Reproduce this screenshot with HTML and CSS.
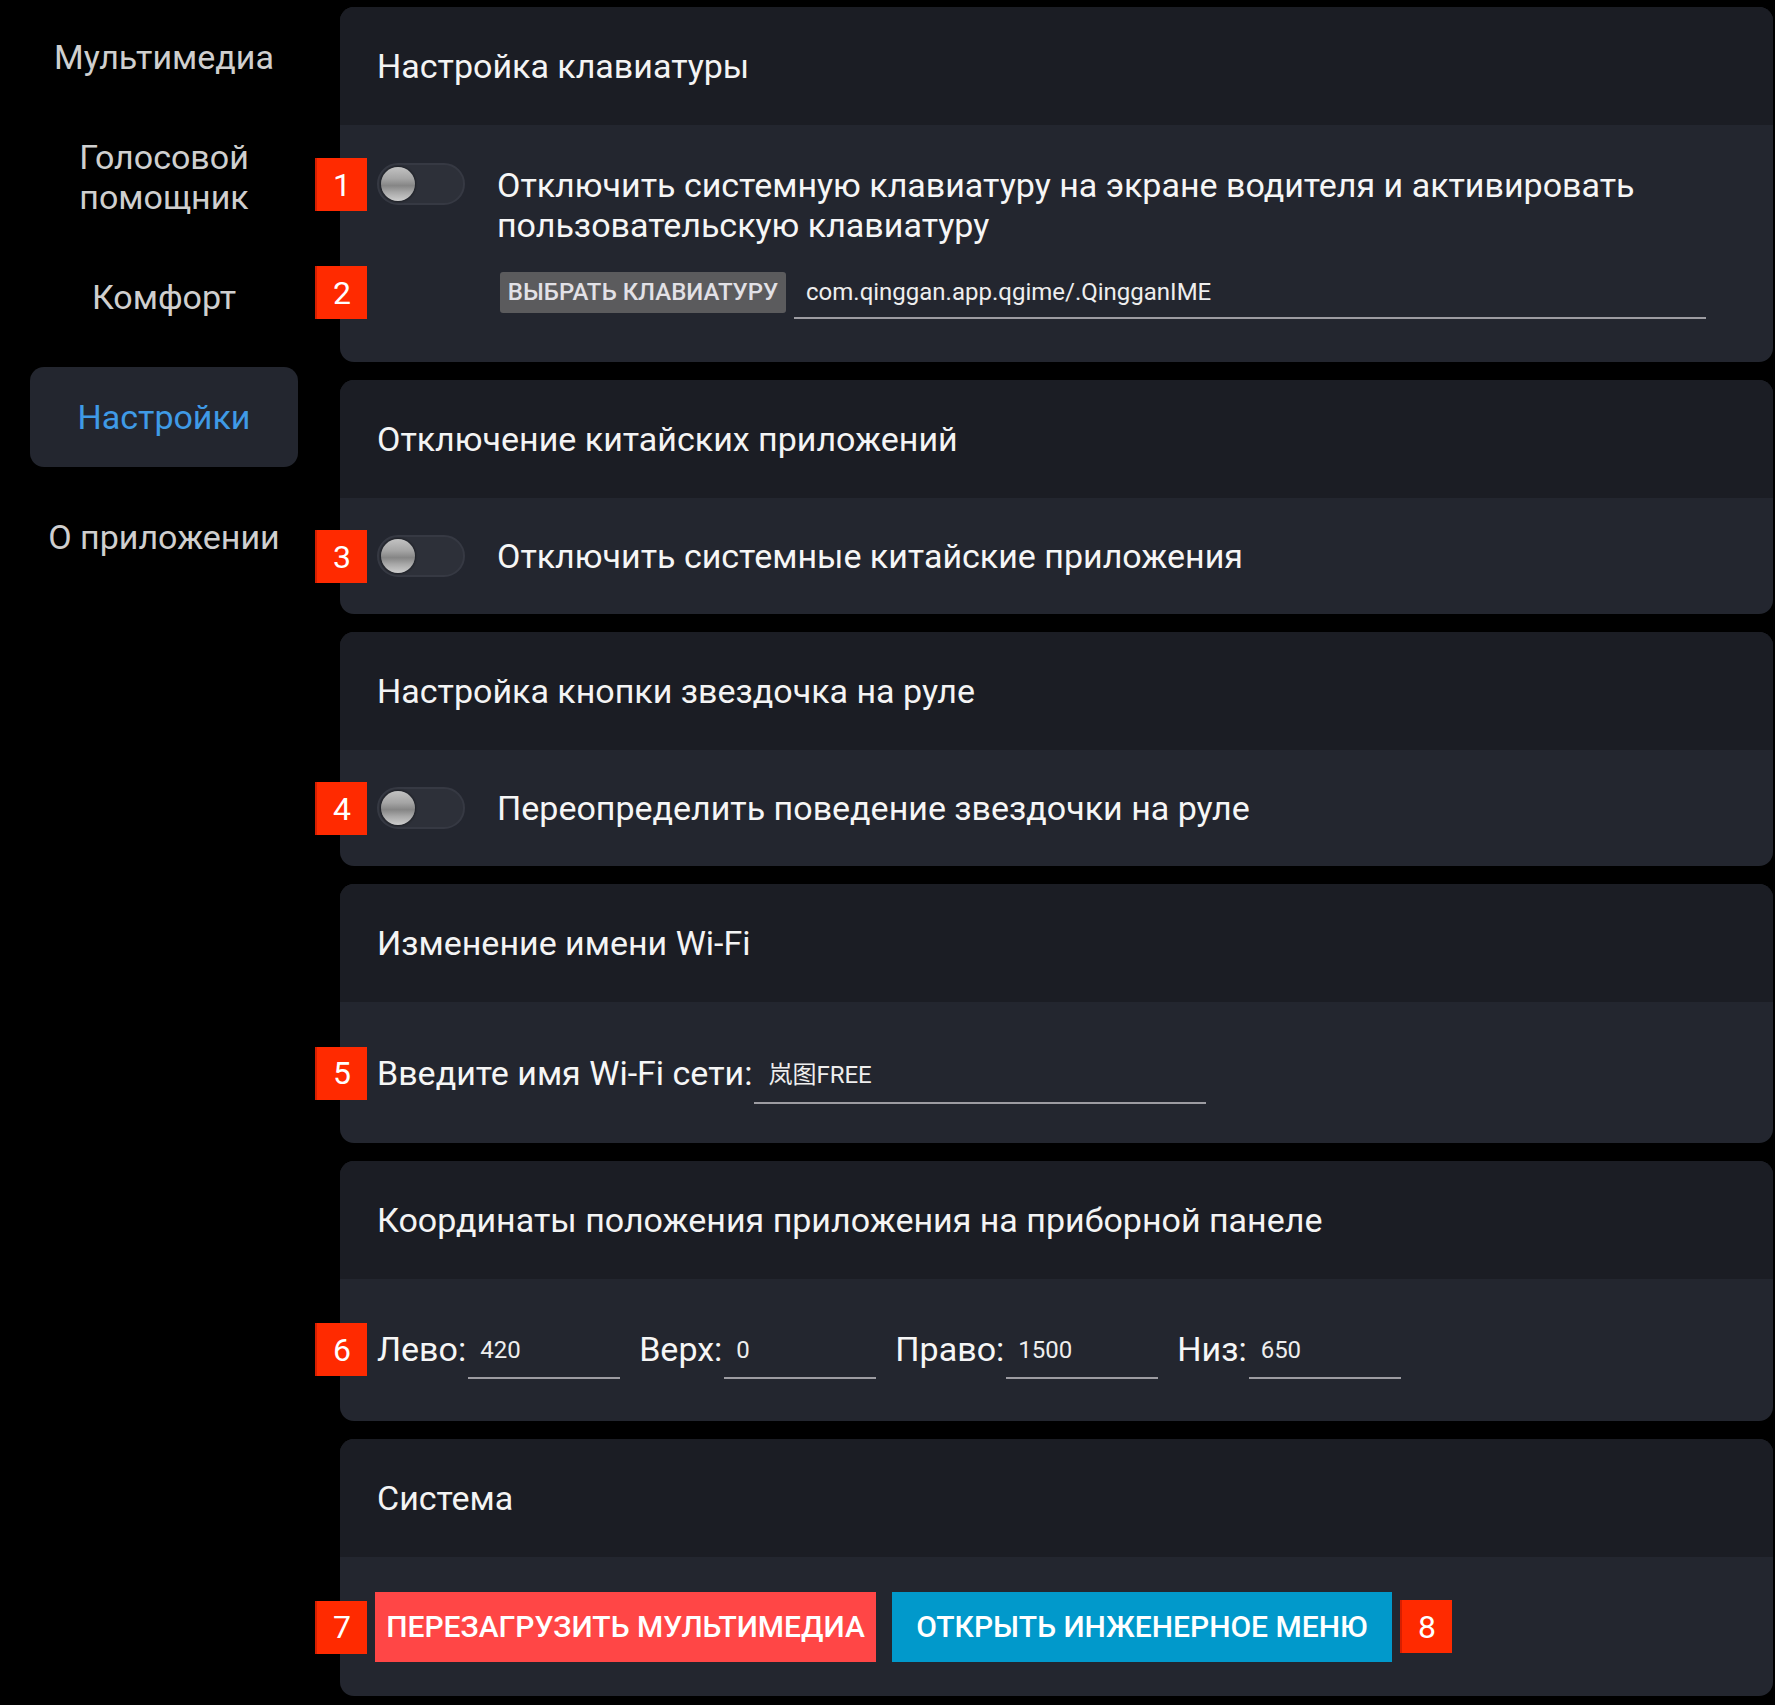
FILE: index.html
```html
<!DOCTYPE html>
<html lang="ru">
<head>
<meta charset="utf-8">
<title>Настройки</title>
<link rel="stylesheet" href="styles.css">
</head>
<body>
<div class="app">
  <nav class="sidebar">
    <div class="nav-item">Мультимедиа</div>
    <div class="nav-item">Голосовой<br>помощник</div>
    <div class="nav-item">Комфорт</div>
    <div class="nav-item active">Настройки</div>
    <div class="nav-item">О приложении</div>
  </nav>
  <main class="content">
    <section class="card">
      <div class="card-head">Настройка клавиатуры</div>
      <div class="card-body body-keyboard">
        <div class="row row-top">
          <span class="badge">1</span>
          <span class="toggle"><span class="knob"></span></span>
          <span class="label label-wrap">Отключить системную клавиатуру на экране водителя и активировать пользовательскую клавиатуру</span>
        </div>
        <div class="row row-select">
          <span class="badge">2</span>
          <button class="btn-gray">ВЫБРАТЬ КЛАВИАТУРУ</button>
          <span class="field field-wide">com.qinggan.app.qgime/.QingganIME</span>
        </div>
      </div>
    </section>

    <section class="card">
      <div class="card-head">Отключение китайских приложений</div>
      <div class="card-body body-short">
        <div class="row">
          <span class="badge">3</span>
          <span class="toggle"><span class="knob"></span></span>
          <span class="label">Отключить системные китайские приложения</span>
        </div>
      </div>
    </section>

    <section class="card">
      <div class="card-head">Настройка кнопки звездочка на руле</div>
      <div class="card-body body-short">
        <div class="row">
          <span class="badge">4</span>
          <span class="toggle"><span class="knob"></span></span>
          <span class="label">Переопределить поведение звездочки на руле</span>
        </div>
      </div>
    </section>

    <section class="card">
      <div class="card-head">Изменение имени Wi-Fi</div>
      <div class="card-body body-wifi">
        <div class="row">
          <span class="badge">5</span>
          <span class="plain">Введите имя Wi-Fi сети:</span>
          <span class="field field-wifi">岚图FREE</span>
        </div>
      </div>
    </section>

    <section class="card">
      <div class="card-head">Координаты положения приложения на приборной панеле</div>
      <div class="card-body body-coords">
        <div class="row coords">
          <span class="badge">6</span>
          <span class="plain">Лево:</span>
          <span class="field field-num">420</span>
          <span class="plain">Верх:</span>
          <span class="field field-num">0</span>
          <span class="plain">Право:</span>
          <span class="field field-num">1500</span>
          <span class="plain">Низ:</span>
          <span class="field field-num">650</span>
        </div>
      </div>
    </section>

    <section class="card">
      <div class="card-head">Система</div>
      <div class="card-body body-buttons">
        <div class="row buttons">
          <span class="badge">7</span>
          <button class="btn-big btn-red">ПЕРЕЗАГРУЗИТЬ МУЛЬТИМЕДИА</button>
          <button class="btn-big btn-blue">ОТКРЫТЬ ИНЖЕНЕРНОЕ МЕНЮ</button>
          <span class="badge badge-inline">8</span>
        </div>
      </div>
    </section>
  </main>
</div>
</body>
</html>
```

FILE: styles.css
```css
* { box-sizing: border-box; }

html, body {
  margin: 0;
  padding: 0;
  background: #000;
}

body {
  font-family: Roboto, "Noto Sans CJK SC", "Liberation Sans", sans-serif;
  color: #fff;
  width: 1775px;
  height: 1705px;
  overflow: hidden;
}

.app {
  display: flex;
  align-items: flex-start;
}

/* Sidebar */
.sidebar {
  width: 340px;
  flex: none;
  padding: 7px 42px 0 30px;
  display: flex;
  flex-direction: column;
  gap: 20px;
}

.nav-item {
  height: 100px;
  display: flex;
  align-items: center;
  justify-content: center;
  text-align: center;
  font-size: 34px;
  line-height: 40px;
  color: #cfcfcf;
  border-radius: 14px;
}

.nav-item.active {
  background: #23262f;
  color: #3f9ae6;
}

/* Cards */
.content {
  width: 1433px;
  flex: none;
  padding-top: 7px;
  display: flex;
  flex-direction: column;
  gap: 18px;
}

.card {
  border-radius: 14px;
  background: #23262f;
}

.card-head {
  height: 118px;
  display: flex;
  align-items: center;
  padding-left: 37px;
  font-size: 34px;
  background: #1b1d24;
  border-radius: 14px 14px 0 0;
  color: #f4f4f4;
}

.card-body {
  padding-left: 37px;
  display: flex;
  flex-direction: column;
  justify-content: center;
  border-radius: 0 0 14px 14px;
}

.body-keyboard {
  height: 237px;
  justify-content: flex-start;
  padding-top: 38px;
}

.body-short { height: 116px; }
.body-wifi { height: 141px; }
.body-coords { height: 142px; }
.body-buttons { height: 139px; }

.row {
  position: relative;
  display: flex;
  align-items: center;
}

.badge {
  position: absolute;
  left: -62px;
  top: 50%;
  margin-top: -26px;
  width: 52px;
  height: 53px;
  background: #ff2a00;
  color: #fff;
  font-size: 32px;
  display: flex;
  align-items: center;
  justify-content: center;
  border-left: 2px solid #d81f00;
}

.row-top { align-items: flex-start; }
.row-top .badge { top: 0; margin-top: -5px; }

.toggle {
  flex: none;
  position: relative;
  width: 88px;
  height: 42px;
  border-radius: 21px;
  background: #2d3039;
  border: 2px solid #363943;
  margin-right: 32px;
}

.knob {
  position: absolute;
  left: 2px;
  top: 2px;
  width: 34px;
  height: 34px;
  border-radius: 50%;
  background: linear-gradient(180deg, #c2c2c2 0%, #a4a4a4 35%, #858585 55%, #a9a9a9 75%, #cdcdcd 100%);
  box-shadow: 0 0 2px 1px rgba(0,0,0,0.35);
}

.label {
  font-size: 34px;
  line-height: 40px;
  color: #f6f6f6;
}

.label-wrap {
  margin-top: 2px;
  max-width: 1220px;
}

.row-select {
  margin-top: 20px;
  padding-left: 123px;
}

.btn-gray {
  flex: none;
  height: 41px;
  width: 286px;
  border: none;
  border-radius: 3px;
  background: #5b5b5d;
  color: #e2e1e6;
  font-family: Roboto, sans-serif;
  font-weight: 500;
  font-size: 24px;
  padding: 0;
}

.field {
  display: block;
  color: #eeeeee;
  font-size: 24px;
  line-height: 28px;
  border-bottom: 2px solid #9d9ca2;
  padding: 13px 0 11px 12px;
}

.field-wide {
  width: 912px;
  margin-left: 8px;
}

.plain {
  font-size: 34px;
  line-height: 40px;
  color: #f6f6f6;
  flex: none;
}

.field-wifi {
  width: 452px;
  margin-left: 2px;
  padding: 17px 0 13px 14px;
  margin-top: 2px;
}

.coords { margin-top: -2px; }
.coords .plain { margin-right: 2px; }

.field-num {
  width: 152px;
  margin-right: 19px;
  padding: 15px 0 13px 12px;
  margin-top: 2px;
}

.buttons { gap: 16px; }

.btn-big {
  flex: none;
  width: 501px;
  height: 70px;
  border: none;
  color: #fff;
  font-family: Roboto, sans-serif;
  font-weight: 500;
  font-size: 30px;
  padding: 0;
}

.btn-red { background: #ff4646; margin-left: -2px; }
.btn-blue { background: #0199cb; width: 500px; }

.badge-inline {
  position: static;
  margin: 0 0 0 -8px;
}
```
